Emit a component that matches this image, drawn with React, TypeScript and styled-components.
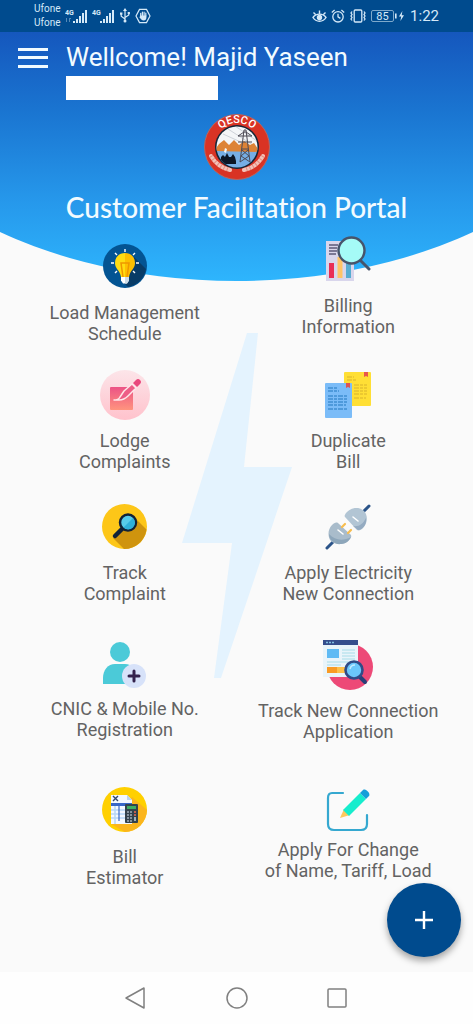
import React from 'react';
import styled, { createGlobalStyle } from 'styled-components';

const GlobalStyle = createGlobalStyle`
  *, *::before, *::after { box-sizing: border-box; }
  body { margin: 0; background: #fafafa; font-family: Roboto, "Liberation Sans", sans-serif; }
  button { font: inherit; color: inherit; background: none; border: 0; padding: 0; cursor: pointer; }
  svg { display: block; }
`;

const Screen = styled.div`
  min-height: 100vh;
  display: flex;
  flex-direction: column;
  position: relative;
`;

const StatusBar = styled.div`
  height: 32px;
  padding: 0 34px;
  display: flex;
  align-items: center;
  justify-content: space-between;
  background: #004b8e;
  color: #d5e9f8;
`;

const StatusGroup = styled.div<{ $gap: number }>`
  display: flex;
  align-items: center;
  gap: ${(p) => p.$gap}px;
`;

const Carriers = styled.div`
  font-size: 10px;
  line-height: 14px;
`;

const Clock = styled.time`
  font-size: 15px;
  line-height: 20px;
`;

const Content = styled.main`
  flex: 1;
  position: relative;
  padding-bottom: 84px;
`;

const Header = styled.header`
  height: 249px;
  background: linear-gradient(#1557bd, #1a75d1 32%, #2698eb 68%, #2eb5fd);
  clip-path: ellipse(84% 100% at 50% 0);
  color: #f2fbff;
  display: flex;
  flex-direction: column;
`;

const Welcome = styled.div`
  display: flex;
  align-items: flex-start;
  gap: 18px;
  padding: 9px 18px 0;
`;

const MenuButton = styled.button`
  width: 30px;
  height: 34px;
`;

const Greeting = styled.h1`
  margin: 0;
  font-size: 26px;
  line-height: 32px;
  font-weight: 400;
`;

const AccountNumber = styled.div`
  width: 152px;
  height: 24px;
  margin-top: 3px;
  background: #fff;
`;

const Brand = styled.div`
  display: flex;
  flex-direction: column;
  align-items: center;
  gap: 8px;
  margin-top: 14px;
`;

const PortalTitle = styled.h2`
  margin: 0;
  font-family: Lato, "Open Sans", sans-serif;
  font-size: 28px;
  line-height: 38px;
  font-weight: 500;
  font-variant-ligatures: none;
  white-space: nowrap;
`;

const Services = styled.nav`
  position: relative;
  margin-top: -45px;
  padding: 0 13px;
  display: grid;
  grid-template-columns: 1fr 1fr;
  grid-template-rows: 134px 134px 136px 147px auto;
  align-items: start;
`;

const Tile = styled.button<{ $top: number; $gap: number }>`
  padding-top: ${(p) => p.$top}px;
  display: flex;
  flex-direction: column;
  align-items: center;
  gap: ${(p) => p.$gap}px;
`;

const TileLabel = styled.span`
  font-size: 18px;
  line-height: 21px;
  color: #636363;
  white-space: pre-line;
`;

const BoltMark = styled.svg`
  position: absolute;
  top: 301px;
  left: 50%;
  margin-left: -55px;
`;

const AddButton = styled.button`
  position: absolute;
  right: 12px;
  bottom: 15px;
  width: 74px;
  height: 74px;
  border-radius: 50%;
  background: #004b8e;
  box-shadow: 0 4px 7px rgba(0, 0, 0, 0.35);
  display: grid;
  place-items: center;
`;

const SystemNav = styled.div`
  height: 52px;
  background: #fefefe;
  display: flex;
  justify-content: center;
  align-items: center;
  gap: 79px;
`;

const SystemButton = styled.button`
  width: 22px;
  height: 22px;
`;

const Signal = ({ ghost }: { ghost?: boolean }) => (
  <svg width="23" height="18" viewBox="0 0 23 18" fill="#d5e9f8" aria-hidden="true">
    <text x="0" y="8" fontSize="7" fontWeight="700" fontFamily="Roboto, sans-serif">4G</text>
    {ghost && <path d="M1 11h1v4H1zM4 11h2v1H5v3H4z" opacity=".4" />}
    <path d="M8 14h2v2H8zM11 12h2v4h-2zM14 9h2v7h-2zM17 6h2v10h-2zM20 3h2v13h-2z" />
  </svg>
);

const UsbIcon = () => (
  <svg width="12" height="16" viewBox="0 0 12 16" fill="none" stroke="#d5e9f8" strokeWidth="1.2" aria-hidden="true">
    <path d="M6 2v11M2.2 6v2.3L6 11M9.8 5v2L6 9.5" />
    <path d="M6 0l2 3H4zM4.5 13a1.5 1.5 0 1 0 3 0 1.5 1.5 0 1 0-3 0M1 4.5h2.4v2.2H1zM8.7 4h2.2v2H8.7z" fill="#d5e9f8" stroke="none" />
  </svg>
);

const HandIcon = () => (
  <svg width="16" height="16" viewBox="0 0 16 16" fill="none" stroke="#d5e9f8" strokeWidth="1.2" aria-hidden="true">
    <path d="M4.5 1.4h7L15 8l-3.5 6.6h-7L1 8z" />
    <path d="M5.7 8V5.4M7.4 7.5V4.2M9.1 7.5V4.2M10.8 8V5.2" strokeWidth="1.2" strokeLinecap="round" />
    <path d="M5.1 7.4h6.3v2.4c0 1.6-1 2.6-2.6 2.6-1.9 0-3.2-1.4-4.6-3.4l.9-.5z" fill="#d5e9f8" stroke="none" />
  </svg>
);

const EyeIcon = () => (
  <svg width="15" height="14" viewBox="0 0 15 14" fill="none" stroke="#d5e9f8" strokeWidth="1.4" aria-hidden="true">
    <path d="M1 8.5C4 4 11 4 14 8.5 11 13.5 4 13.5 1 8.5zM1.5 3.5l2 2M7.5 1.5v3M13.5 3.5l-2 2" />
    <circle cx="7.5" cy="8.5" r="2" fill="#d5e9f8" />
  </svg>
);

const AlarmIcon = () => (
  <svg width="14" height="14" viewBox="0 0 14 14" fill="none" stroke="#d5e9f8" strokeWidth="1.3" aria-hidden="true">
    <circle cx="7" cy="7.8" r="5.2" />
    <path d="M7 4.8v3l2.4 1.6M.8 3.4L3.6 1M13.2 3.4L10.4 1" />
  </svg>
);

const VibrateIcon = () => (
  <svg width="18" height="14" viewBox="0 0 18 14" fill="none" stroke="#d5e9f8" strokeWidth="1.3" aria-hidden="true">
    <rect x="5.2" y="1" width="7.6" height="12" rx="1" />
    <path d="M3 2.5L2 4l1 1.5L2 7l1 1.5L2 10l1 1.5M15 2.5L16 4l-1 1.5L16 7l-1 1.5 1 1.5-1 1.5" />
  </svg>
);

const BatteryIcon = () => (
  <svg width="35" height="14" viewBox="0 0 35 14" fill="#d5e9f8" aria-hidden="true">
    <rect x=".5" y="1.5" width="22" height="11" rx="1.5" fill="none" stroke="#7ea9cb" />
    <text x="11.5" y="11" fontSize="11" textAnchor="middle" fontFamily="Roboto, sans-serif">85</text>
    <path d="M24 4.5h1.6v5H24zM31.4 2L28 7.6h2.2L29.4 12 33 6.2h-2.3z" />
  </svg>
);

const Emblem = () => (
  <svg width="66" height="66" viewBox="0 0 66 66" role="img" aria-label="QESCO">
    <defs>
      <path id="ring" d="M9 33a24 24 0 0 1 48 0" />
      <clipPath id="disc"><circle cx="33" cy="33" r="20.500" /></clipPath>
    </defs>
    <circle cx="33" cy="33" r="32.500" fill="#d93324" stroke="#b9655f" />
    <circle cx="33" cy="33" r="22" fill="#152636" />
    <g clipPath="url(#disc)">
      <path fill="#f4f6f8" d="M10 10h46v26H10z" />
      <path fill="#76aee5" d="M10 36h46v22H10z" />
      <path d="M24 15l28 18M31 12l22 15M19 20l20 9" stroke="#bcc2ca" strokeWidth=".7" />
      <path fill="#dd8336" d="M10 37l5-7 5-4 5 5 5-5 5 5 5-4 6 4 4-2 6 9z" />
      <path fill="#0c1626" d="M17 50v-7l2-2 2 2 2-4 2 4 2 0 2-3 2 3 1 4v3z" />
      <path fill="#f4f6f8" d="M20 38l1-4 2 1-1 4z" />
      <path d="M36 48l4-32h2l4 32M34 22h14M34 28h14M34 22l6-4h2l6 4M38 36l7 6-9 6M44 36l-7 6 9 6M38 35h6" fill="none" stroke="#4c4a55" strokeWidth="1" />
    </g>
    <text fill="#fff" fontSize="11" fontWeight="500" fontFamily="Roboto, sans-serif" textAnchor="middle">
      <textPath href="#ring" startOffset="50%">QESCO</textPath>
    </text>
    <g fill="none" strokeLinecap="round">
      <path d="M7 42c4 7 10 12 19 14M59 42c-4 7-10 12-19 14" stroke="#f3c2b8" strokeWidth="4" />
      <path d="M7 42c4 7 10 12 19 14M59 42c-4 7-10 12-19 14" stroke="#d9685a" strokeWidth="4" strokeDasharray="1 2.500" strokeLinecap="butt" opacity=".6" />
    </g>
  </svg>
);

const BulbIcon = () => (
  <svg width="44" height="44" viewBox="0 0 44 44" aria-hidden="true">
    <circle cx="22" cy="22" r="22" fill="#035493" />
    <path fill="#083b66" d="M31 13l12 12a22 22 0 0 1-18 18l-6-6z" />
    <path d="M22 5v3M12 9l2 2M32 9l-2 2M8 19h3M33 19h3M12 29l2-2M32 29l-2-2" stroke="#fff" strokeWidth="1.400" />
    <path fill="#ffdc12" d="M22 9c-6 0-10 4-10 10 0 6 5 7 6 14h4z" />
    <path fill="#fdbf00" d="M22 9c6 0 10 4 10 10 0 6-5 7-6 14h-4z" />
    <path d="M20 33l-2-14h8l-2 14" fill="none" stroke="#ee9700" strokeWidth="1.500" />
    <path fill="#fff" d="M18 33h8v3.500l-2 3h-4l-2-3z" />
    <path fill="#ccdce8" d="M22 33h4v3.500l-2 3h-2z" />
  </svg>
);

const BillingIcon = () => (
  <svg width="46" height="46" viewBox="0 0 46 46" aria-hidden="true">
    <path fill="#d9d6ec" d="M1 5h28v40H1z" />
    <path d="M4 9h9M4 12h8M4 15h8M4 18h7" stroke="#5c5978" strokeWidth="1.3" />
    <path fill="#e92d56" d="M4 27h5v15H4z" />
    <path fill="#ffc466" d="M12.5 21h5v21h-5z" />
    <path fill="#57add1" d="M21 24h5v18h-5z" />
    <path d="M36 25l8 8" stroke="#47546b" strokeWidth="3" strokeLinecap="round" />
    <circle cx="26.5" cy="14.5" r="13" fill="#a5fbf7" stroke="#47546b" strokeWidth="2.4" />
  </svg>
);

const ComplaintIcon = () => (
  <svg width="50" height="50" viewBox="0 0 50 50" aria-hidden="true">
    <defs>
      <linearGradient id="pinkDisc" x2="0" y2="1"><stop stopColor="#fce5e9" /><stop offset="1" stopColor="#ffc2cc" /></linearGradient>
      <linearGradient id="note" x2="0" y2="1"><stop stopColor="#ec5386" /><stop offset="1" stopColor="#ff947e" /></linearGradient>
    </defs>
    <circle cx="25" cy="25" r="25" fill="url(#pinkDisc)" />
    <rect x="10" y="17" width="23" height="23" rx="1" fill="url(#note)" />
    <path d="M14 30h5c5 0 7-2 9-4l8-8-4-4-8 7-4 6c-1 2-3 3-6 3z" fill="#ed5e87" stroke="#ffe7ea" strokeWidth="1.5" strokeLinejoin="round" />
    <path d="M33 13l3-3a2.6 2.6 0 0 1 4 4l-3 3z" fill="#e9477c" />
  </svg>
);

const DuplicateIcon = () => (
  <svg width="46" height="46" viewBox="0 0 46 46" aria-hidden="true">
    <rect x="19" y="0" width="27" height="34" rx="1" fill="#ffdf35" />
    <path d="M22 5h7M22 8h10M29 13h13M29 16h13M29 19h13M29 22h13M29 26h12" stroke="#d9b32c" strokeWidth="1.2" strokeDasharray="5 1 3 1" />
    <path fill="#e8574b" d="M39 0h4v5l-2-1-2 1z" />
    <rect x="0" y="11" width="27" height="35" rx="1" fill="#7bbcf8" />
    <path d="M3 16h9M3 19h11M3 24h20M3 27h20M3 30h20M3 33h18M3 37h19" stroke="#408fd2" strokeWidth="1.3" strokeDasharray="5 1 3 1" />
    <path fill="#dc5355" d="M21 11h4v5l-2-1-2 1z" />
  </svg>
);

const SearchDiscIcon = () => (
  <svg width="45" height="45" viewBox="0 0 45 45" aria-hidden="true">
    <circle cx="22.5" cy="22.5" r="22.5" fill="#fdc618" />
    <path fill="#cf940e" d="M32 13l12.5 12.5A22.5 22.5 0 0 1 22 45L11 34z" />
    <path d="M13 32l8-8" stroke="#112238" strokeWidth="4.5" strokeLinecap="round" />
    <circle cx="26" cy="18.5" r="8" fill="#57cbea" stroke="#112238" strokeWidth="2.5" />
    <path fill="#2fb0da" d="M31 14a6.7 6.7 0 0 1-9.5 9.5z" />
  </svg>
);

const PlugIcon = () => (
  <svg width="46" height="46" viewBox="0 0 46 46" aria-hidden="true">
    <path d="M2 44l7-7M37 9l7-7" stroke="#2b5489" strokeWidth="3" strokeLinecap="round" />
    <path d="M7 21c-5 5-4 13-1 16s11 5 17 0c2-2 4-4 3-6L13 19c-2-1-4 0-6 2z" fill="#a9bccb" />
    <path d="M4 30c0 6 6 11 12 10 5 0 8-3 10-7-7 4-16 4-22-3z" fill="#8da6ba" />
    <path d="M22 8c5-5 13-5 17-1s4 12-1 17c-2 2-4 3-6 2L20 13c-1-1 0-3 2-5z" fill="#b2c5d4" />
    <path d="M41 14c1 6-3 12-8 12l-5-4c6 1 10-2 13-8z" fill="#94abc1" />
    <path d="M13 26l5 4M28 13l5 4" stroke="#fff" strokeWidth="1.6" strokeLinecap="round" />
    <path d="M17 23l3-3M23 29l3-3" stroke="#f8bd4e" strokeWidth="2.2" strokeLinecap="round" />
  </svg>
);

const RegisterIcon = () => (
  <svg width="46" height="46" viewBox="0 0 46 46" aria-hidden="true">
    <circle cx="18" cy="10" r="10" fill="#4bcad8" />
    <path fill="#4bcad8" d="M1 42v-6c0-8 5-14 12-14h10c7 0 11 5 11 12v8z" />
    <circle cx="32" cy="34" r="12" fill="#d7e2f9" />
    <path d="M32 29v10M27 34h10" stroke="#33214c" strokeWidth="3" strokeLinecap="round" />
  </svg>
);

const TrackIcon = () => (
  <svg width="50" height="50" viewBox="0 0 50 50" aria-hidden="true">
    <circle cx="27" cy="27" r="23" fill="#ed4977" />
    <path fill="#e9f4fa" d="M0 4h35v33H0z" />
    <path fill="#354d8c" d="M0 0h35v5H0z" />
    <path d="M3 2.5h2M6 2.5h2M9 2.5h2" stroke="#80c0e0" strokeWidth="1.3" />
    <path fill="#5fbaf4" d="M4 9h12v9H4z" />
    <path d="M19 10h13M19 13h13M19 16h13M19 19h13M4 22h28M4 25h14" stroke="#a7dce7" strokeWidth="1.2" />
    <path fill="#f99b25" d="M4 27h18v6H4z" />
    <path fill="#fdc04a" d="M14 27h8v6h-8z" />
    <path d="M37 37l5 5" stroke="#293f78" strokeWidth="4" strokeLinecap="round" />
    <circle cx="31" cy="30" r="8.5" fill="#6bc7fa" stroke="#304c87" strokeWidth="2.6" />
    <path d="M27 29a5 5 0 0 1 5-4" stroke="#c3edff" strokeWidth="1.5" fill="none" />
  </svg>
);

const EstimatorIcon = () => (
  <svg width="45" height="45" viewBox="0 0 45 45" aria-hidden="true">
    <circle cx="22.5" cy="22.5" r="22.5" fill="#ffd000" />
    <path fill="#fbb51d" d="M30 10l15 13a22.5 22.5 0 0 1-22 22L9 37z" />
    <path fill="#f3f8ff" d="M9 8h16l5 5v24H9z" />
    <path fill="#b9d3f3" d="M25 8l5 5h-5z" />
    <path d="M11 9l5 5M16 9l-5 5" stroke="#33466c" strokeWidth="1.4" />
    <path fill="#3867c8" d="M9 16h21v3H9z" />
    <path d="M9 23h20M9 27h20M9 31h20M13 19v18" stroke="#b6d6f8" strokeWidth="1.5" />
    <path d="M17 16v18" stroke="#3867c8" strokeWidth="1.2" />
    <rect x="23" y="17" width="13" height="19" rx="1" fill="#34424d" />
    <path fill="#3eae63" d="M25 19h9v3h-9z" />
    <path d="M25 25h6M25 28h6M25 31h6M25 34h6" stroke="#a1afba" strokeWidth="1.6" strokeDasharray="2 1" />
    <path d="M32 25h2M32 28h2" stroke="#ef6a4d" strokeWidth="1.6" />
    <path d="M32 32h2" stroke="#a1afba" strokeWidth="4" />
  </svg>
);

const ChangeIcon = () => (
  <svg width="44" height="44" viewBox="0 0 44 44" aria-hidden="true">
    <path d="M17 5H6C3 5 2 7 2 10v26c0 4 2 6 6 6h27c4 0 6-2 6-6v-9" fill="none" stroke="#35a8d0" strokeWidth="2.2" strokeLinecap="round" />
    <path fill="#ffc95d" d="M14 30l4-9 6 6z" />
    <path fill="#17edcd" d="M17 22L34 5l6 6-17 17z" />
    <path fill="#169fd9" d="M34 5l3-3c2-2 8 3 6 6l-3 3z" />
  </svg>
);

type Service = { label: string; icon: React.ReactNode; top: number; gap: number };

const services: Service[] = [
  { label: 'Load Management\nSchedule', icon: <BulbIcon />, top: 8, gap: 14 },
  { label: 'Billing\nInformation', icon: <BillingIcon />, top: 0, gap: 13 },
  { label: 'Lodge\nComplaints', icon: <ComplaintIcon />, top: 0, gap: 10 },
  { label: 'Duplicate\nBill', icon: <DuplicateIcon />, top: 2, gap: 12 },
  { label: 'Track\nComplaint', icon: <SearchDiscIcon />, top: 0, gap: 13 },
  { label: 'Apply Electricity\nNew Connection', icon: <PlugIcon />, top: 0, gap: 12 },
  { label: 'CNIC & Mobile No.\nRegistration', icon: <RegisterIcon />, top: 2, gap: 10 },
  { label: 'Track New Connection\nApplication', icon: <TrackIcon />, top: 0, gap: 10 },
  { label: 'Bill\nEstimator', icon: <EstimatorIcon />, top: 0, gap: 14 },
  { label: 'Apply For Change\nof Name, Tariff, Load', icon: <ChangeIcon />, top: 1, gap: 7 },
];

export default function App() {
  return (
    <Screen>
      <GlobalStyle />
      <StatusBar>
        <StatusGroup $gap={4}>
          <Carriers>
            <div>Ufone</div>
            <div>Ufone</div>
          </Carriers>
          <Signal ghost />
          <Signal />
          <UsbIcon />
          <HandIcon />
        </StatusGroup>
        <StatusGroup $gap={4}>
          <EyeIcon />
          <AlarmIcon />
          <VibrateIcon />
          <BatteryIcon />
          <Clock>1:22</Clock>
        </StatusGroup>
      </StatusBar>

      <Content>
        <Header>
          <Welcome>
            <MenuButton aria-label="Open menu">
              <svg width="30" height="34" viewBox="0 0 30 34" fill="#f2fbff">
                <path d="M0 7h30v3H0zM0 15h30v3H0zM0 24h30v3H0z" />
              </svg>
            </MenuButton>
            <div>
              <Greeting>Wellcome! Majid Yaseen</Greeting>
              <AccountNumber />
            </div>
          </Welcome>
          <Brand>
            <Emblem />
            <PortalTitle>Customer Facilitation Portal</PortalTitle>
          </Brand>
        </Header>

        <BoltMark width="110" height="346" viewBox="0 0 110 346" aria-hidden="true">
          <path fill="#e4f3fe" d="M65 0h11L62 134h48L39 345h-7l18-135H0z" />
        </BoltMark>

        <Services>
          {services.map((s) => (
            <Tile key={s.label} $top={s.top} $gap={s.gap}>
              {s.icon}
              <TileLabel>{s.label}</TileLabel>
            </Tile>
          ))}
        </Services>

        <AddButton aria-label="Add">
          <svg width="20" height="20" viewBox="0 0 20 20" stroke="#fff" strokeWidth="2.4">
            <path d="M10 1v18M1 10h18" />
          </svg>
        </AddButton>
      </Content>

      <SystemNav>
        <SystemButton aria-label="Back">
          <svg width="22" height="22" viewBox="0 0 22 22" fill="none" stroke="#808080" strokeWidth="1.5" strokeLinejoin="round">
            <path d="M19 1v20L1 11z" />
          </svg>
        </SystemButton>
        <SystemButton aria-label="Home">
          <svg width="22" height="22" viewBox="0 0 22 22" fill="none" stroke="#808080" strokeWidth="1.5">
            <circle cx="11" cy="11" r="10" />
          </svg>
        </SystemButton>
        <SystemButton aria-label="Recent apps">
          <svg width="22" height="22" viewBox="0 0 22 22" fill="none" stroke="#808080" strokeWidth="1.5">
            <rect x="1" y="2" width="18" height="18" rx="1" />
          </svg>
        </SystemButton>
      </SystemNav>
    </Screen>
  );
}
